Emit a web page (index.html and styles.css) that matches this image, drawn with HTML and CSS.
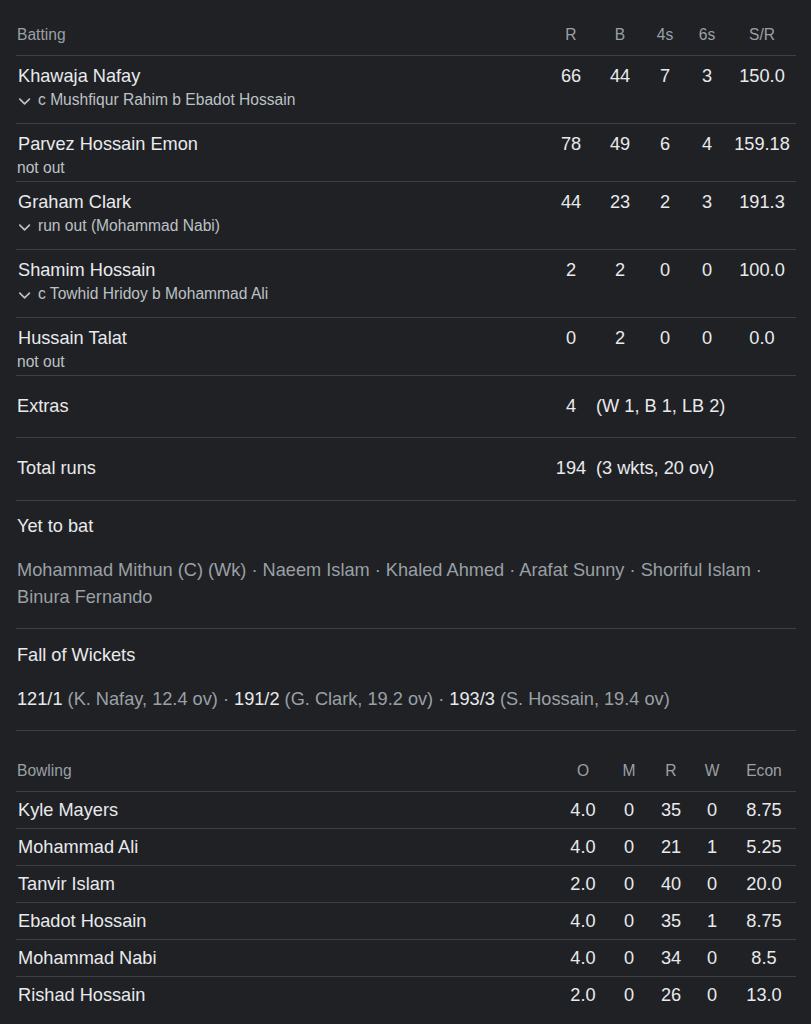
FILE: index.html
```html
<!DOCTYPE html>
<html lang="en">
<head>
<meta charset="utf-8">
<title>Scorecard</title>
<link rel="stylesheet" href="styles.css">
</head>
<body>
<main class="card">
  <section class="batting">
    <div class="bat-grid thead">
      <span class="label">Batting</span>
      <span class="c">R</span>
      <span class="c">B</span>
      <span class="c">4s</span>
      <span class="c">6s</span>
      <span class="c">S/R</span>
    </div>

    <div class="bat-grid brow">
      <div class="player">
        <div class="name">Khawaja Nafay</div>
        <div class="how"><svg class="chev" viewBox="0 0 20 20" width="20" height="20"><path d="M3.8 9.2 L8.6 13.8 L13.4 9.2"/></svg>c Mushfiqur Rahim b Ebadot Hossain</div>
      </div>
      <span class="num">66</span><span class="num">44</span><span class="num">7</span><span class="num">3</span><span class="num">150.0</span>
    </div>

    <div class="bat-grid brow notout">
      <div class="player">
        <div class="name">Parvez Hossain Emon</div>
        <div class="how plain">not out</div>
      </div>
      <span class="num">78</span><span class="num">49</span><span class="num">6</span><span class="num">4</span><span class="num">159.18</span>
    </div>

    <div class="bat-grid brow">
      <div class="player">
        <div class="name">Graham Clark</div>
        <div class="how"><svg class="chev" viewBox="0 0 20 20" width="20" height="20"><path d="M3.8 9.2 L8.6 13.8 L13.4 9.2"/></svg>run out (Mohammad Nabi)</div>
      </div>
      <span class="num">44</span><span class="num">23</span><span class="num">2</span><span class="num">3</span><span class="num">191.3</span>
    </div>

    <div class="bat-grid brow">
      <div class="player">
        <div class="name">Shamim Hossain</div>
        <div class="how"><svg class="chev" viewBox="0 0 20 20" width="20" height="20"><path d="M3.8 9.2 L8.6 13.8 L13.4 9.2"/></svg>c Towhid Hridoy b Mohammad Ali</div>
      </div>
      <span class="num">2</span><span class="num">2</span><span class="num">0</span><span class="num">0</span><span class="num">100.0</span>
    </div>

    <div class="bat-grid brow notout">
      <div class="player">
        <div class="name">Hussain Talat</div>
        <div class="how plain">not out</div>
      </div>
      <span class="num">0</span><span class="num">2</span><span class="num">0</span><span class="num">0</span><span class="num">0.0</span>
    </div>

    <div class="bat-grid trow">
      <span class="name">Extras</span>
      <span class="num">4</span>
      <span class="desc">(W 1, B 1, LB 2)</span>
    </div>

    <div class="bat-grid trow total">
      <span class="name">Total runs</span>
      <span class="num">194</span>
      <span class="desc">(3 wkts, 20 ov)</span>
    </div>
  </section>

  <section class="info yet">
    <h3 class="info-title">Yet to bat</h3>
    <p class="info-list">Mohammad Mithun (C) (Wk) · Naeem Islam · Khaled Ahmed · Arafat Sunny · Shoriful Islam · Binura Fernando</p>
  </section>

  <section class="info fow">
    <h3 class="info-title">Fall of Wickets</h3>
    <p class="info-list"><span class="hi">121/1</span> (K. Nafay, 12.4 ov) · <span class="hi">191/2</span> (G. Clark, 19.2 ov) · <span class="hi">193/3</span> (S. Hossain, 19.4 ov)</p>
  </section>

  <section class="bowling">
    <div class="bowl-grid bhead">
      <span class="label">Bowling</span>
      <span class="c">O</span>
      <span class="c">M</span>
      <span class="c">R</span>
      <span class="c">W</span>
      <span class="c">Econ</span>
    </div>
    <div class="bowl-grid bwrow">
      <span class="name">Kyle Mayers</span>
      <span class="num">4.0</span><span class="num">0</span><span class="num">35</span><span class="num">0</span><span class="num">8.75</span>
    </div>
    <div class="bowl-grid bwrow">
      <span class="name">Mohammad Ali</span>
      <span class="num">4.0</span><span class="num">0</span><span class="num">21</span><span class="num">1</span><span class="num">5.25</span>
    </div>
    <div class="bowl-grid bwrow">
      <span class="name">Tanvir Islam</span>
      <span class="num">2.0</span><span class="num">0</span><span class="num">40</span><span class="num">0</span><span class="num">20.0</span>
    </div>
    <div class="bowl-grid bwrow">
      <span class="name">Ebadot Hossain</span>
      <span class="num">4.0</span><span class="num">0</span><span class="num">35</span><span class="num">1</span><span class="num">8.75</span>
    </div>
    <div class="bowl-grid bwrow">
      <span class="name">Mohammad Nabi</span>
      <span class="num">4.0</span><span class="num">0</span><span class="num">34</span><span class="num">0</span><span class="num">8.5</span>
    </div>
    <div class="bowl-grid bwrow last">
      <span class="name">Rishad Hossain</span>
      <span class="num">2.0</span><span class="num">0</span><span class="num">26</span><span class="num">0</span><span class="num">13.0</span>
    </div>
  </section>
</main>
</body>
</html>
```

FILE: styles.css
```css
html, body {
  margin: 0;
  padding: 0;
  background: #202124;
}

body {
  font-family: "Liberation Sans", Arial, Helvetica, sans-serif;
  color: #e8eaed;
  -webkit-font-smoothing: antialiased;
}

.card {
  padding: 0 15px 0 16px;
}

/* ---------- grids ---------- */
.bat-grid {
  display: grid;
  grid-template-columns: 1fr 50px 48px 42px 42px 68px;
  border-bottom: 1px solid #3c4043;
}

.bowl-grid {
  display: grid;
  grid-template-columns: 1fr 50px 42px 42px 40px 64px;
  border-bottom: 1px solid #3c4043;
}

.c {
  text-align: center;
}

.label {
  padding-left: 1px;
}

/* ---------- header rows ---------- */
.thead,
.bhead {
  font-size: 15.6px;
  line-height: 20px;
  color: #9aa0a6;
}

.thead {
  padding: 25px 0 10px;
}

.bhead {
  padding: 30px 0 10px;
}

/* ---------- batting rows ---------- */
.brow {
  padding: 9px 0 13px;
  align-items: start;
}

.brow.notout {
  padding-bottom: 3px;
}

.name {
  font-size: 18.2px;
  line-height: 22px;
  color: #e8eaed;
  padding-left: 2px;
}

.player .name {
  padding-left: 2px;
}

.num {
  font-size: 18.2px;
  line-height: 22px;
  text-align: center;
  color: #e8eaed;
}

.how {
  display: flex;
  align-items: center;
  margin-top: 3px;
  font-size: 15.6px;
  line-height: 20px;
  color: #bdc1c6;
}

.how.plain {
  padding-left: 1px;
}

.chev {
  flex: 0 0 20px;
  margin-right: 2px;
  fill: none;
  stroke: #bdc1c6;
  stroke-width: 1.7;
  stroke-linecap: round;
  stroke-linejoin: round;
}

/* ---------- extras / total ---------- */
.trow {
  padding: 19px 0 20px;
  align-items: center;
}

.trow .name {
  padding-left: 1px;
}

.trow.total {
  padding-bottom: 21px;
}

.desc {
  grid-column: span 4;
  font-size: 18.2px;
  line-height: 22px;
  color: #e8eaed;
  white-space: nowrap;
}

/* ---------- info sections ---------- */
.info {
  border-bottom: 1px solid #3c4043;
  padding: 14px 0 17px 1px;
}

.info.fow {
  padding-top: 15px;
}

.info-title {
  margin: 0;
  font-size: 18.2px;
  line-height: 22px;
  font-weight: normal;
  color: #e8eaed;
}

.info-list {
  margin: 20px 0 0;
  font-size: 18.2px;
  line-height: 27px;
  color: #9aa0a6;
}

.hi {
  color: #e8eaed;
}

/* ---------- bowling rows ---------- */
.bwrow {
  padding: 7px 0 7px;
  align-items: center;
}

.bwrow .name {
  padding-left: 2px;
}

.bwrow.last {
  border-bottom: none;
}
```
